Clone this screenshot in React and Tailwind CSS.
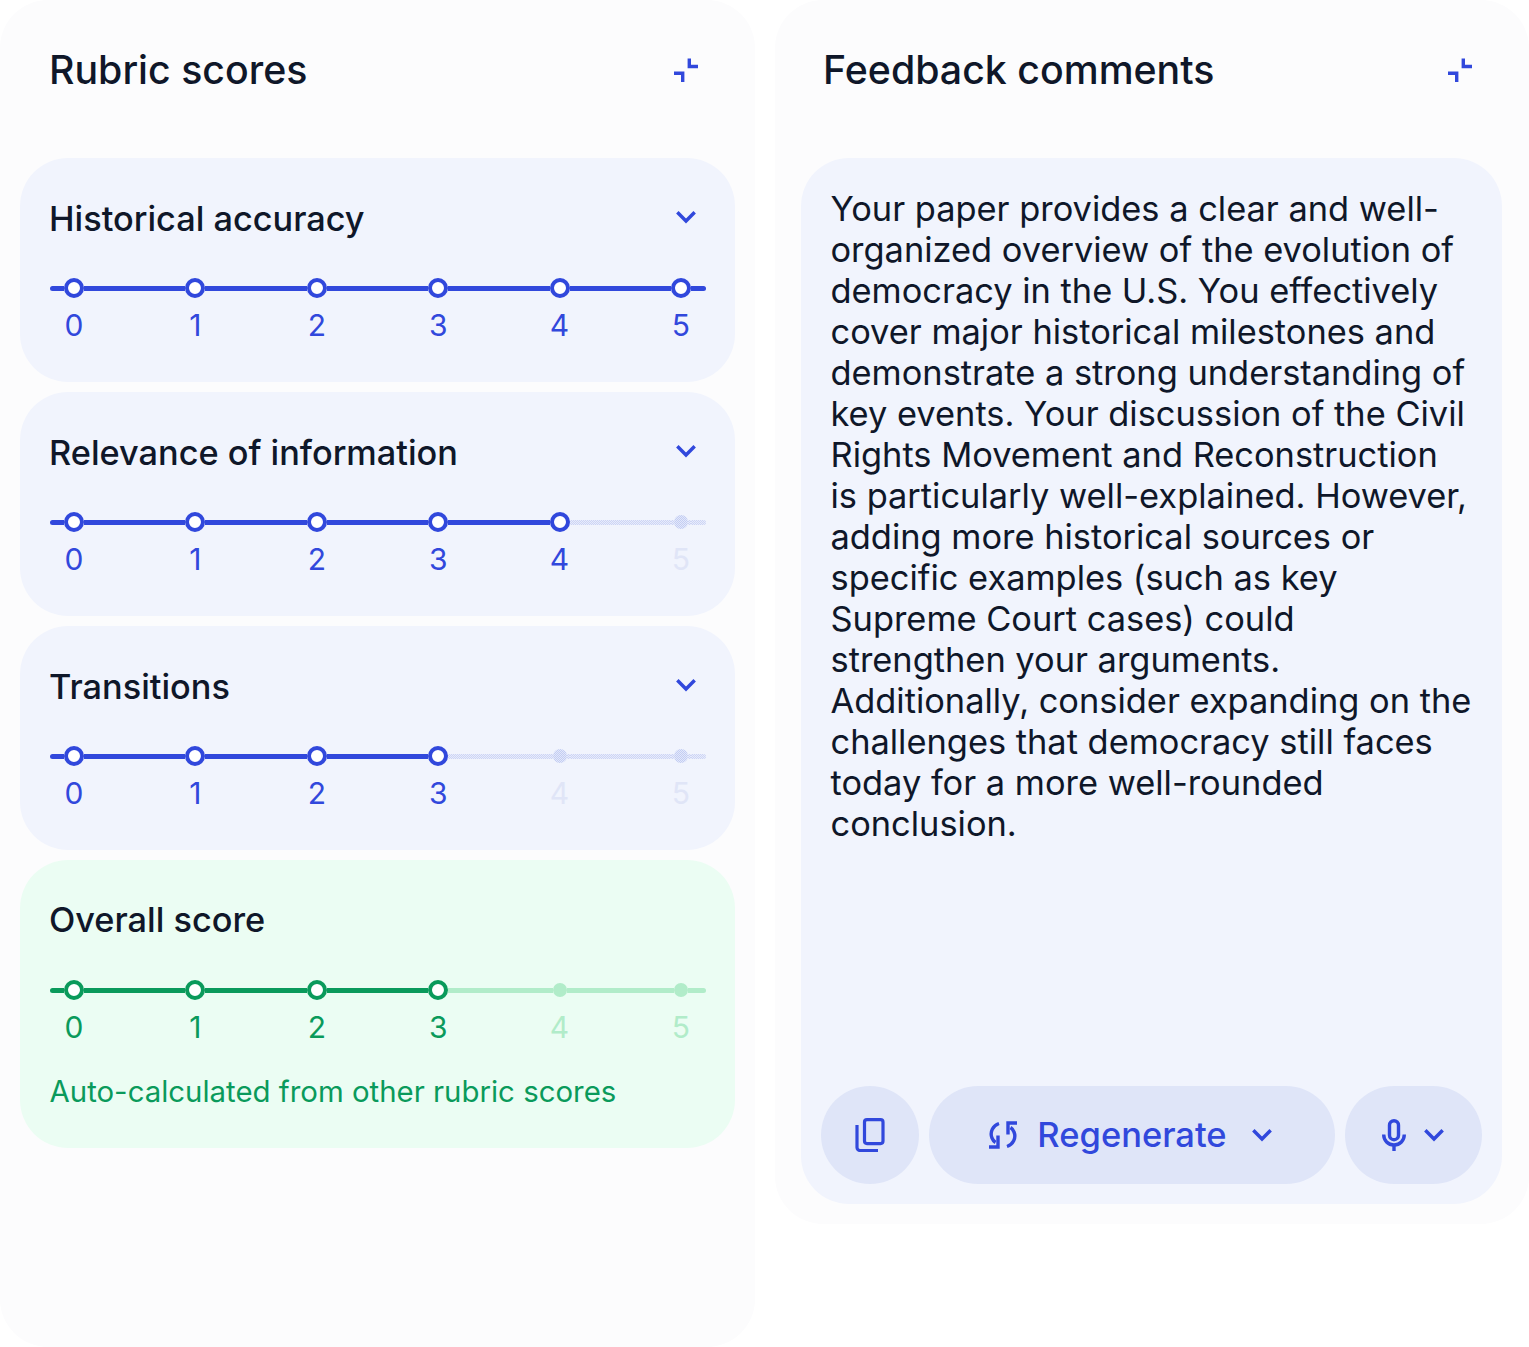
const rubrics = [
  { title: 'Historical accuracy', score: 5 },
  { title: 'Relevance of information', score: 4 },
  { title: 'Transitions', score: 3 },
];

const feedback =
  'Your paper provides a clear and well-organized overview of the evolution of democracy in the U.S. You effectively cover major historical milestones and demonstrate a strong understanding of key events. Your discussion of the Civil Rights Movement and Reconstruction is particularly well-explained. However, adding more historical sources or specific examples (such as key Supreme Court cases) could strengthen your arguments. Additionally, consider expanding on the challenges that democracy still faces today for a more well-rounded conclusion.';

const themes = {
  blue: {
    line: 'bg-[#3148dc]',
    ring: 'border-[#3148dc]',
    text: 'text-[#3148dc]',
    lineOff: 'bg-[#e0e5f9] bg-[image:repeating-conic-gradient(#ccd4f5_0_25%,#e8ecfb_0_50%)] bg-[length:2px_2px]',
    dotOff: 'bg-[#dbe1f8] bg-[image:repeating-conic-gradient(#c3cdf3_0_25%,#e3e8fa_0_50%)] bg-[length:2px_2px]',
    textOff: 'text-[#e0e5f7]',
  },
  green: {
    line: 'bg-[#0a9a5b]',
    ring: 'border-[#0a9a5b]',
    text: 'text-[#0a9a5b]',
    lineOff: 'bg-[#b1ecc9]',
    dotOff: 'bg-[#b1ecc9]',
    textOff: 'text-[#b1ecc9]',
  },
};

function CollapseIcon({ className }) {
  return (
    <svg viewBox="0 0 24 24" width="24" height="24" fill="none" stroke="currentColor" strokeWidth="3.4" className={className}>
      <path d="M15.300 0.500V8.500H24" />
      <path d="M0 15.200H8.700V24" />
    </svg>
  );
}

function Chevron({ className }) {
  return (
    <svg viewBox="0 0 24 24" width="32" height="32" fill="none" stroke="currentColor" strokeWidth="2.600" className={className}>
      <path d="M5.500 8.500 12 15l6.500-6.500" />
    </svg>
  );
}

function CopyIcon() {
  return (
    <svg viewBox="0 0 30 34" width="30" height="34" fill="none" stroke="currentColor" strokeWidth="3.200" strokeLinejoin="round">
      <rect x="9.500" y="1.600" width="18.500" height="24" rx="2.500" />
      <path d="M2 7v22.500a3 3 0 0 0 3 3h18" />
    </svg>
  );
}

function RegenIcon() {
  return (
    <svg viewBox="0 0 28 28" width="28" height="28" fill="none" stroke="currentColor" strokeWidth="3.400">
      <path d="M10 2.500C4 4.500 0.500 11 3 17c.8 2 2 3.500 3.500 4.500" />
      <path d="M9 14.500v11.500H0" />
      <path d="M18 25.500c6-2 9.500-8.500 7-14.500-.8-2-2-3.500-3.500-4.500" />
      <path d="M19 13.500V2h9" />
    </svg>
  );
}

function MicIcon() {
  return (
    <svg viewBox="0 0 24 32" width="24" height="32" fill="none" stroke="currentColor" strokeWidth="3.400">
      <rect x="7.500" y="1.700" width="9" height="19" rx="4.500" />
      <path d="M1.700 15.500c0 6 4.300 10.500 10.300 10.500s10.300-4.500 10.300-10.500" />
      <path d="M12 26v6" />
    </svg>
  );
}

function ScoreScale({ score, color = 'blue' }) {
  const t = themes[color];
  const points = [0, 1, 2, 3, 4, 5];
  return (
    <div>
      <div className="-mr-px flex h-[20px] items-center">
        <div className={`h-[5px] w-[14px] rounded-l-full ${t.line}`} />
        {points.map((p) => (
          <div key={p} className={`flex h-[20px] items-center ${p === 5 ? 'w-[35px]' : 'flex-1'}`}>
            {p <= score ? (
              <div className={`h-[20px] w-[20px] shrink-0 rounded-full border-[4px] bg-white ${t.ring}`} />
            ) : (
              <>
                <div className={`h-[5px] w-[3px] shrink-0 ${t.lineOff}`} />
                <div className={`h-[14px] w-[14px] shrink-0 rounded-full ${t.dotOff}`} />
                <div className={`h-[5px] w-[3px] shrink-0 ${t.lineOff}`} />
              </>
            )}
            <div className={`h-[5px] flex-1 ${p === 5 ? 'rounded-r-full' : ''} ${p < score || score === 5 ? t.line : t.lineOff}`} />
          </div>
        ))}
      </div>
      <div className="mt-[9px] flex justify-between px-[12px] text-[30px] leading-[36px]">
        {points.map((p) => (
          <span key={p} className={`w-6 text-center ${p <= score ? t.text : t.textOff}`}>{p}</span>
        ))}
      </div>
    </div>
  );
}

function RubricCard({ title, score }) {
  return (
    <section className="h-[224px] rounded-[48px] bg-[#f1f4fd] px-[30px] pt-[37px]">
      <div className="flex h-[48px] items-start justify-between">
        <h3 className="-ml-px text-[34.300px] font-medium leading-[48px] text-[#0f1729]">{title}</h3>
        <Chevron className="mr-[3px] mt-[6px] text-[#3148dc]" />
      </div>
      <div className="mt-[35px]">
        <ScoreScale score={score} />
      </div>
    </section>
  );
}

export default function App() {
  return (
    <div className="flex w-[1529px] items-start gap-[20px] bg-white font-['Inter',sans-serif]">
      <div className="h-[1347px] w-[755px] rounded-[48px] bg-[#fcfcfd] px-[20px]">
        <header className="flex h-[158px] items-start justify-between pl-[29px] pr-[37px] pt-[46px]">
          <h2 className="text-[39.300px] font-medium leading-[48px] text-[#0f1729]">Rubric scores</h2>
          <CollapseIcon className="mt-[12px] text-[#3148dc]" />
        </header>
        <div className="flex flex-col gap-[10px]">
          {rubrics.map((r) => (
            <RubricCard key={r.title} title={r.title} score={r.score} />
          ))}
          <section className="h-[288px] rounded-[48px] bg-[#ebfdf3] px-[30px] pt-[36px]">
            <h3 className="-ml-px text-[34.300px] font-medium leading-[48px] text-[#0f1729]">Overall score</h3>
            <div className="mt-[36px]">
              <ScoreScale score={3} color="green" />
            </div>
            <p className="mt-[27px] -ml-[0.500px] text-[29.400px] leading-[40px] text-[#0a9a5b]">Auto-calculated from other rubric scores</p>
          </section>
        </div>
      </div>

      <div className="h-[1224px] w-[754px] rounded-[48px] bg-[#fcfcfd] px-[26px]">
        <header className="flex h-[158px] items-start justify-between pl-[22px] pr-[31px] pt-[46px]">
          <h2 className="text-[39.300px] font-medium leading-[48px] text-[#0f1729]">Feedback comments</h2>
          <CollapseIcon className="mt-[12px] text-[#3148dc]" />
        </header>
        <section className="flex h-[1046px] w-[701px] flex-col justify-between rounded-[48px] bg-[#f1f4fd] p-[20px]">
          <p className="pl-[9.500px] pr-[10.500px] pt-[10px] text-[34.400px] leading-[41px] text-[#0f1729]">{feedback}</p>
          <div className="flex gap-[10px] text-[#3148dc]">
            <button className="flex h-[98px] w-[98px] items-center justify-center rounded-full bg-[#dfe5f8]">
              <CopyIcon />
            </button>
            <button className="flex h-[98px] w-[406px] items-center justify-center gap-[20px] rounded-full bg-[#dfe5f8] pl-[3px]">
              <RegenIcon />
              <span className="text-[34.500px] font-medium">Regenerate</span>
              <Chevron className="-ml-px" />
            </button>
            <button className="flex h-[98px] w-[137px] items-center justify-center gap-[12px] rounded-full bg-[#dfe5f8] pl-[5px]">
              <MicIcon />
              <Chevron />
            </button>
          </div>
        </section>
      </div>
    </div>
  );
}
